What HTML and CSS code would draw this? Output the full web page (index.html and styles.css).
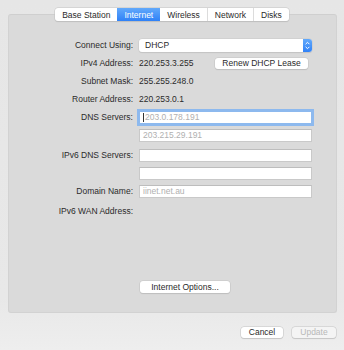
FILE: index.html
```html
<!DOCTYPE html>
<html>
<head>
  <title>Internet</title>
  <link rel="stylesheet" href="styles.css">
</head>
<body>
  <div class="window">
    <div class="tabs">
      <div class="tab">Base Station</div>
      <div class="tab active">Internet</div>
      <div class="tab">Wireless</div>
      <div class="tab">Network</div>
      <div class="tab">Disks</div>
    </div>

    <div class="panel">
      <div class="row">
        <div class="label">Connect Using:</div>
        <div class="popup">
          <span>DHCP</span>
          <span class="stepper">
            <svg width="9" height="13" viewBox="0 0 9 13">
              <path d="M2.6 5.2 L4.5 3.3 L6.4 5.2" fill="none" stroke="#fff" stroke-width="1"/>
              <path d="M2.6 7.8 L4.5 9.7 L6.4 7.8" fill="none" stroke="#fff" stroke-width="1"/>
            </svg>
          </span>
        </div>
      </div>
      <div class="row">
        <div class="label">IPv4 Address:</div>
        <div class="value">220.253.3.255</div>
        <button class="btn renew">Renew DHCP Lease</button>
      </div>
      <div class="row">
        <div class="label">Subnet Mask:</div>
        <div class="value">255.255.248.0</div>
      </div>
      <div class="row">
        <div class="label">Router Address:</div>
        <div class="value">220.253.0.1</div>
      </div>
      <div class="row">
        <div class="label">DNS Servers:</div>
        <div class="field focus"><span class="caret"></span>203.0.178.191</div>
      </div>
      <div class="row">
        <div class="label"></div>
        <div class="field">203.215.29.191</div>
      </div>
      <div class="row spaced">
        <div class="label">IPv6 DNS Servers:</div>
        <div class="field"></div>
      </div>
      <div class="row">
        <div class="label"></div>
        <div class="field"></div>
      </div>
      <div class="row">
        <div class="label">Domain Name:</div>
        <div class="field">iinet.net.au</div>
      </div>
      <div class="row spaced">
        <div class="label">IPv6 WAN Address:</div>
      </div>

      <div class="options">
        <button class="btn">Internet Options...</button>
      </div>
    </div>

    <div class="footer">
      <button class="btn cancel">Cancel</button>
      <button class="btn disabled">Update</button>
    </div>
  </div>
</body>
</html>
```

FILE: styles.css
```css
body {
  margin: 0;
  font-family: "Liberation Sans", Arial, sans-serif;
  font-size: 8.5px;
  color: #2a2a2a;
}

.window {
  width: 344px;
  height: 350px;
  background: linear-gradient(to bottom, #e6e6e6 0%, #e8e8e8 85%, #eeeeee 100%);
  display: flex;
  flex-direction: column;
}

.tabs {
  align-self: center;
  display: flex;
  margin-top: 8px;
  height: 13px;
  background: #fff;
  border-radius: 3px;
  box-shadow: 0 0 0 0.5px #c4c4c4, 0 1px 1px rgba(0,0,0,0.15);
  position: relative;
  z-index: 1;
}

.tab {
  display: flex;
  align-items: center;
  justify-content: center;
  padding: 0 7px;
  border-left: 1px solid #dcdcdc;
}

.tab:first-child {
  border-left: none;
  border-radius: 3px 0 0 3px;
}

.tab:last-child {
  border-radius: 0 3px 3px 0;
}

.tab.active {
  background: linear-gradient(to bottom, #62a9fb, #2f81f7);
  color: #fff;
  border-left: none;
}

.tab.active + .tab {
  border-left: none;
}

.panel {
  margin: -7px 7px 0 8px;
  height: 299px;
  box-sizing: border-box;
  background: #dadada;
  border: 1px solid #d2d2d2;
  border-top-color: #cfcfcf;
  border-radius: 3px;
  padding-top: 21px;
  display: flex;
  flex-direction: column;
}

.row {
  display: flex;
  align-items: center;
  height: 18px;
  gap: 6px;
}

.row.spaced {
  margin-top: 2px;
}

.label {
  width: 124px;
  text-align: right;
  flex-shrink: 0;
}

.popup {
  width: 173px;
  height: 13px;
  box-sizing: border-box;
  background: #fff;
  border-radius: 3px;
  box-shadow: 0 0 0 0.5px #c8c8c8, 0 1px 1px rgba(0,0,0,0.12);
  display: flex;
  align-items: center;
  padding-left: 6px;
}

.popup span:first-child {
  flex: 1;
}

.stepper {
  width: 9px;
  height: 13px;
  border-radius: 0 3px 3px 0;
  background: linear-gradient(to bottom, #62a9fb, #2f81f7);
  display: flex;
}

.value {
  white-space: nowrap;
}

.field {
  width: 173px;
  height: 13px;
  box-sizing: border-box;
  background: #fff;
  border: 1px solid #c9c9c9;
  border-top-color: #bdbdbd;
  color: #b0b0b0;
  padding-left: 3px;
  display: flex;
  align-items: center;
}

.field.focus {
  box-shadow: 0 0 0 2px #8db9ee;
  border-color: #8db9ee;
}

.caret {
  width: 1px;
  height: 9px;
  background: #333;
  margin-right: 1px;
}

.btn {
  font-family: inherit;
  font-size: 8.5px;
  color: #2a2a2a;
  background: #fff;
  border: none;
  border-radius: 3px;
  box-shadow: 0 0 0 0.5px #c4c4c4, 0 1px 1px rgba(0,0,0,0.15);
  height: 11px;
  padding: 0;
  line-height: 11px;
}

.renew {
  width: 93px;
  margin-left: auto;
  margin-right: 28px;
}

.options {
  margin-top: auto;
  margin-bottom: 19px;
  padding-left: 131px;
}

.options .btn {
  width: 90px;
  height: 12px;
}

.footer {
  display: flex;
  justify-content: flex-end;
  gap: 9px;
  margin: 14px 8px 0 0;
}

.cancel {
  width: 42px;
}

.disabled {
  width: 44px;
  color: #b8b8b8;
  background: #f4f4f4;
}
```
